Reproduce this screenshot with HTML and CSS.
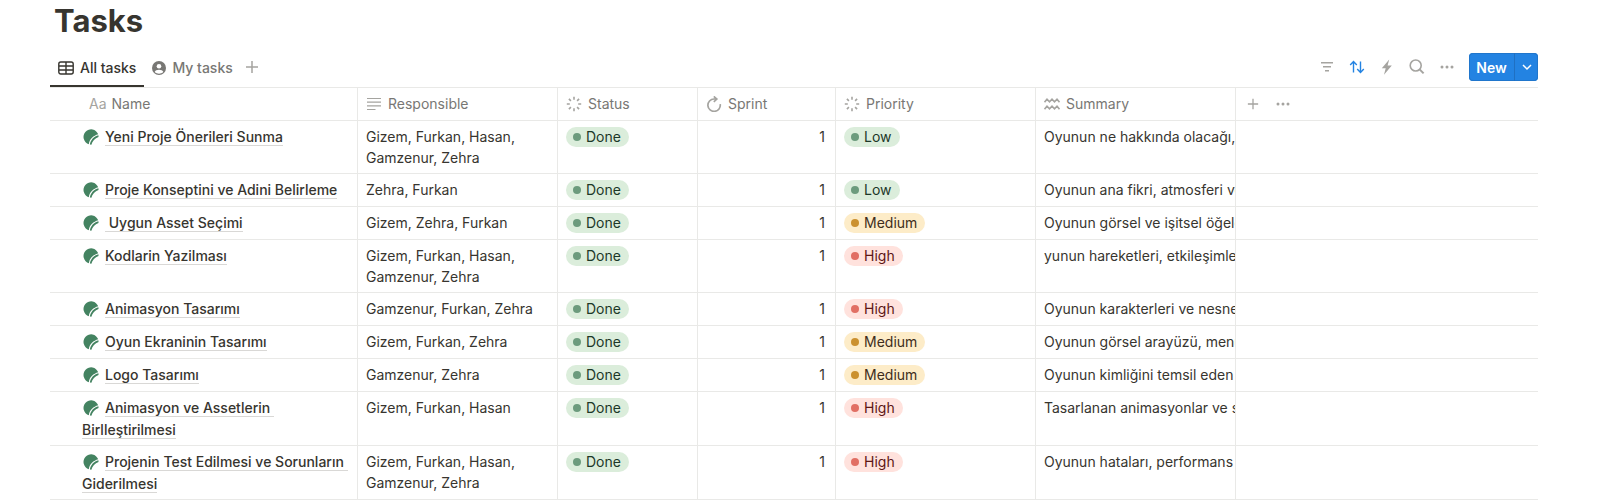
FILE: index.html
```html
<!DOCTYPE html>
<html lang="tr">
<head>
<meta charset="utf-8">
<meta name="viewport" content="width=device-width, initial-scale=1">
<title>Tasks</title>
<link rel="stylesheet" href="styles.css">
</head>
<body>
<svg class="defs" aria-hidden="true">
  <symbol id="task" viewBox="0 0 16 16"><path d="M5.800 15.200A7.600 7.600 0 1 1 15.200 5.200C10.500 6.600 6.600 9.800 5.800 15.200Z" fill="#448361"/><path d="M6.900 15.500C7.600 10.800 10.800 7.500 15.500 6.200V7.900C12 9.300 9.300 12 8.400 15.700Z" fill="#448361"/></symbol>
  <symbol id="loader" viewBox="0 0 16 16"><path d="M8 .8v3M8 12.200v3M.8 8h3M12.200 8h3M2.900 2.900l2 2M11.100 11.100l2 2M2.900 13.100l2-2M11.100 4.900l2-2" fill="none" stroke="currentColor" stroke-width="1.6"/></symbol>
  <symbol id="dots" viewBox="0 0 14 14"><circle cx="2" cy="7" r="1.5"/><circle cx="7" cy="7" r="1.5"/><circle cx="12" cy="7" r="1.5"/></symbol>
  <symbol id="plus" viewBox="0 0 14 14"><path d="M7 1v12M1 7h12" fill="none" stroke="currentColor" stroke-width="1.5"/></symbol>
</svg>
<main class="page">
  <h1 class="title">Tasks</h1>
  <div class="bar">
    <div class="tabs">
      <button class="tab tab-active" type="button"><svg class="i16" viewBox="0 0 16 16" fill="none" stroke="currentColor" stroke-width="1.4"><rect x=".8" y="2" width="14.4" height="12" rx="2"/><path d="M1 6h14M1 10h14M8 2v12"/></svg>All tasks</button>
      <button class="tab" type="button"><svg class="i14" viewBox="0 0 14 14"><circle cx="7" cy="7" r="7" fill="currentColor"/><circle cx="7" cy="5.2" r="2.3" fill="#fff"/><path d="M2.7 11.1c.7-3.2 7.9-3.2 8.6 0C9 13.2 5 13.2 2.7 11.1Z" fill="#fff"/></svg>My tasks</button>
      <button class="icon-btn add-view" type="button" aria-label="Add view"><svg class="i14"><use href="#plus"/></svg></button>
    </div>
    <div class="tools">
      <button class="icon-btn" type="button" aria-label="Filter"><svg class="i14" viewBox="0 0 14 14" fill="none" stroke="currentColor" stroke-width="1.6"><path d="M1 2.7h12M3 6.7h8M5 10.7h4"/></svg></button>
      <button class="icon-btn icon-on" type="button" aria-label="Sort"><svg class="i16" viewBox="0 0 16 16" fill="none" stroke="currentColor" stroke-width="1.4"><path d="M4.500 13.500V2.800M1.200 6l3.300-3.400L7.800 6M11.500 2.500v10.700M8.200 10l3.300 3.400L14.800 10"/></svg></button>
      <button class="icon-btn" type="button" aria-label="Automations"><svg class="i16" viewBox="0 0 16 16" fill="currentColor"><path d="M10.200.4 2.800 9.200h3.900L5 15.800 12.800 6.400H8.600Z"/></svg></button>
      <button class="icon-btn" type="button" aria-label="Search"><svg class="i16" viewBox="0 0 16 16" fill="none" stroke="currentColor" stroke-width="1.6"><circle cx="6.700" cy="6.500" r="5.500"/><path d="m10.600 10.400 4 4" stroke-width="2"/></svg></button>
      <button class="icon-btn" type="button" aria-label="More"><svg class="i14" fill="currentColor"><use href="#dots"/></svg></button>
      <div class="new"><button class="new-main" type="button">New</button><button class="new-more" type="button" aria-label="Templates"><svg class="i10" viewBox="0 0 10 10" fill="none" stroke="currentColor" stroke-width="1.5"><path d="m1 3 4 4 4-4"/></svg></button></div>
    </div>
  </div>
  <table class="grid">
    <colgroup><col class="w-name"><col class="w-text"><col class="w-status"><col class="w-sprint"><col class="w-text"><col class="w-text"><col></colgroup>
    <thead>
      <tr>
        <th scope="col" class="h-name"><span class="head"><span class="aa">Aa</span>Name</span></th>
        <th scope="col"><span class="head"><svg class="i16" viewBox="0 0 16 16" fill="none" stroke="currentColor" stroke-width="1.2"><path d="M1 2.500h14M1 6.200h14M1 9.800h14M1 13.500h8.500"/></svg>Responsible</span></th>
        <th scope="col"><span class="head"><svg class="i16"><use href="#loader"/></svg>Status</span></th>
        <th scope="col"><span class="head"><svg class="i16" viewBox="0 0 16 16" fill="none" stroke="currentColor" stroke-width="1.700"><path d="M14.200 8.200A6.200 6.200 0 1 1 8 3h2.800M7.800.4l3 2.600-3 2.800"/></svg>Sprint</span></th>
        <th scope="col"><span class="head"><svg class="i16"><use href="#loader"/></svg>Priority</span></th>
        <th scope="col"><span class="head"><svg class="i16" viewBox="0 0 16 16" fill="none" stroke="currentColor" stroke-width="1.6"><path d="m.5 6.200 2.500-3 2.500 2.600L8 3.200l2.500 2.600L13 3.200l2.500 3M.5 13.200l2.500-3 2.500 2.600L8 10.200l2.500 2.600 2.500-2.600 2.500 3"/></svg>Summary</span></th>
        <td><span class="head-actions"><button class="icon-btn" type="button" aria-label="Add property"><svg class="i12" viewBox="0 0 14 14"><use href="#plus"/></svg></button><button class="icon-btn" type="button" aria-label="Properties"><svg class="i14" fill="currentColor"><use href="#dots"/></svg></button></span></td>
      </tr>
    </thead>
    <tbody>
      <tr><td class="name"><svg class="task-icon"><use href="#task"/></svg><a href="#">Yeni Proje Önerileri Sunma</a></td><td>Gizem, Furkan, Hasan, Gamzenur, Zehra</td><td><span class="pill green">Done</span></td><td class="num">1</td><td><span class="pill green">Low</span></td><td class="clip">Oyunun ne hakkında olacağı, n</td><td></td></tr>
      <tr><td class="name"><svg class="task-icon"><use href="#task"/></svg><a href="#">Proje Konseptini ve Adini Belirleme</a></td><td>Zehra, Furkan</td><td><span class="pill green">Done</span></td><td class="num">1</td><td><span class="pill green">Low</span></td><td class="clip">Oyunun ana fikri, atmosferi ve</td><td></td></tr>
      <tr><td class="name"><svg class="task-icon"><use href="#task"/></svg><a href="#">&nbsp;Uygun Asset Seçimi</a></td><td>Gizem, Zehra, Furkan</td><td><span class="pill green">Done</span></td><td class="num">1</td><td><span class="pill yellow">Medium</span></td><td class="clip">Oyunun görsel ve işitsel öğele</td><td></td></tr>
      <tr><td class="name"><svg class="task-icon"><use href="#task"/></svg><a href="#">Kodlarin Yazilması</a></td><td>Gizem, Furkan, Hasan, Gamzenur, Zehra</td><td><span class="pill green">Done</span></td><td class="num">1</td><td><span class="pill red">High</span></td><td class="clip">yunun hareketleri, etkileşimler</td><td></td></tr>
      <tr><td class="name"><svg class="task-icon"><use href="#task"/></svg><a href="#">Animasyon Tasarımı</a></td><td>Gamzenur, Furkan, Zehra</td><td><span class="pill green">Done</span></td><td class="num">1</td><td><span class="pill red">High</span></td><td class="clip">Oyunun karakterleri ve nesnel</td><td></td></tr>
      <tr><td class="name"><svg class="task-icon"><use href="#task"/></svg><a href="#">Oyun Ekraninin Tasarımı</a></td><td>Gizem, Furkan, Zehra</td><td><span class="pill green">Done</span></td><td class="num">1</td><td><span class="pill yellow">Medium</span></td><td class="clip">Oyunun görsel arayüzü, menü</td><td></td></tr>
      <tr><td class="name"><svg class="task-icon"><use href="#task"/></svg><a href="#">Logo Tasarımı</a></td><td>Gamzenur, Zehra</td><td><span class="pill green">Done</span></td><td class="num">1</td><td><span class="pill yellow">Medium</span></td><td class="clip">Oyunun kimliğini temsil eden v</td><td></td></tr>
      <tr><td class="name"><svg class="task-icon"><use href="#task"/></svg><a href="#">Animasyon ve Assetlerin&nbsp; Birlleştirilmesi</a></td><td>Gizem, Furkan, Hasan</td><td><span class="pill green">Done</span></td><td class="num">1</td><td><span class="pill red">High</span></td><td class="clip">Tasarlanan animasyonlar ve se</td><td></td></tr>
      <tr><td class="name"><svg class="task-icon"><use href="#task"/></svg><a href="#">Projenin Test Edilmesi ve Sorunların&nbsp; Giderilmesi</a></td><td>Gizem, Furkan, Hasan, Gamzenur, Zehra</td><td><span class="pill green">Done</span></td><td class="num">1</td><td><span class="pill red">High</span></td><td class="clip">Oyunun hataları, performans s</td><td></td></tr>
    </tbody>
  </table>
</main>
</body>
</html>
```

FILE: styles.css
```css
* { box-sizing: border-box; }
body {
  margin: 0;
  background: #fff;
  color: #37352f;
  font: 14px/21px Inter, "Liberation Sans", sans-serif;
}
button {
  margin: 0;
  padding: 0;
  border: 0;
  background: none;
  color: inherit;
  font: inherit;
  cursor: pointer;
}
svg { display: block; flex: none; }
.defs { position: absolute; width: 0; height: 0; }
.i10 { width: 10px; height: 10px; }
.i12 { width: 12px; height: 12px; }
.i14 { width: 14px; height: 14px; }
.i16 { width: 16px; height: 16px; }

.page { padding: 0 67px 0 50px; }
.title {
  margin: 0;
  padding: 1px 4px 5px;
  font-size: 31px;
  line-height: 40px;
  font-weight: 700;
}
.bar {
  display: flex;
  justify-content: space-between;
  height: 42px;
  border-bottom: 1px solid #e9e9e7;
}
.tabs, .tools { display: flex; }
.tab {
  display: flex;
  align-items: center;
  gap: 6px;
  height: 41px;
  padding: 4px 8px 0;
  border-bottom: 2px solid transparent;
  color: #787774;
  font-weight: 500;
}
.tab-active { border-color: #37352f; color: #37352f; }
.icon-btn {
  display: flex;
  align-items: center;
  justify-content: center;
  width: 30px;
  color: #a5a4a0;
}
.icon-on { color: #2383e2; }
.add-view { width: 22px; height: 42px; }
.tools { height: 28px; margin-top: 7px; }
.new {
  display: flex;
  margin-left: 7px;
  border-radius: 4px;
  background: #2383e2;
  box-shadow: inset 0 0 0 1px #2076cc;
  color: #fff;
  font-weight: 600;
}
.new-main { width: 46px; border-right: 1px solid #1f70c2; }
.new-more { display: flex; align-items: center; justify-content: center; width: 23px; }

.grid { width: 100%; border-collapse: separate; border-spacing: 0; table-layout: fixed; }
.w-name { width: 308px; }
.w-text { width: 200px; }
.w-status { width: 140px; }
.w-sprint { width: 138px; }
th, td {
  height: 33px;
  padding: 5px 8px;
  border-right: 1px solid #e9e9e7;
  border-bottom: 1px solid #e9e9e7;
  text-align: left;
  vertical-align: top;
}
th:last-child, td:last-child { border-right: 0; }
th { color: #787774; font-weight: 400; }
th svg, .aa { color: #a5a4a0; }
.head { display: flex; align-items: center; gap: 6px; }
.h-name { padding-left: 39px; }
.h-name .head { gap: 5px; }
.head-actions { display: flex; height: 21px; margin-left: -6px; }
.name { padding: 5px 8px 4px 32px; line-height: 22px; font-weight: 500; }
.name a { color: inherit; text-decoration: none; border-bottom: 1px solid #d9d8d6; }
.task-icon {
  display: inline-block;
  width: 16px;
  height: 16px;
  margin: 0 6px 0 1px;
  vertical-align: -3px;
}
.num { padding-right: 10px; text-align: right; }
.clip { overflow: hidden; padding-right: 0; white-space: nowrap; }
.pill {
  display: flex;
  align-items: center;
  gap: 5px;
  width: max-content;
  height: 20px;
  margin-top: 1px;
  padding: 0 8px 0 7px;
  border-radius: 10px;
  line-height: 20px;
}
.pill::before { content: ""; width: 8px; height: 8px; border-radius: 50%; }
.green { background: #dbeddb; color: #1c3829; }
.green::before { background: #6c9b7d; }
.yellow { background: #fdecc8; color: #402c1b; }
.yellow::before { background: #cb912f; }
.red { background: #ffe2dd; color: #5d1715; }
.red::before { background: #e16f64; }
```
